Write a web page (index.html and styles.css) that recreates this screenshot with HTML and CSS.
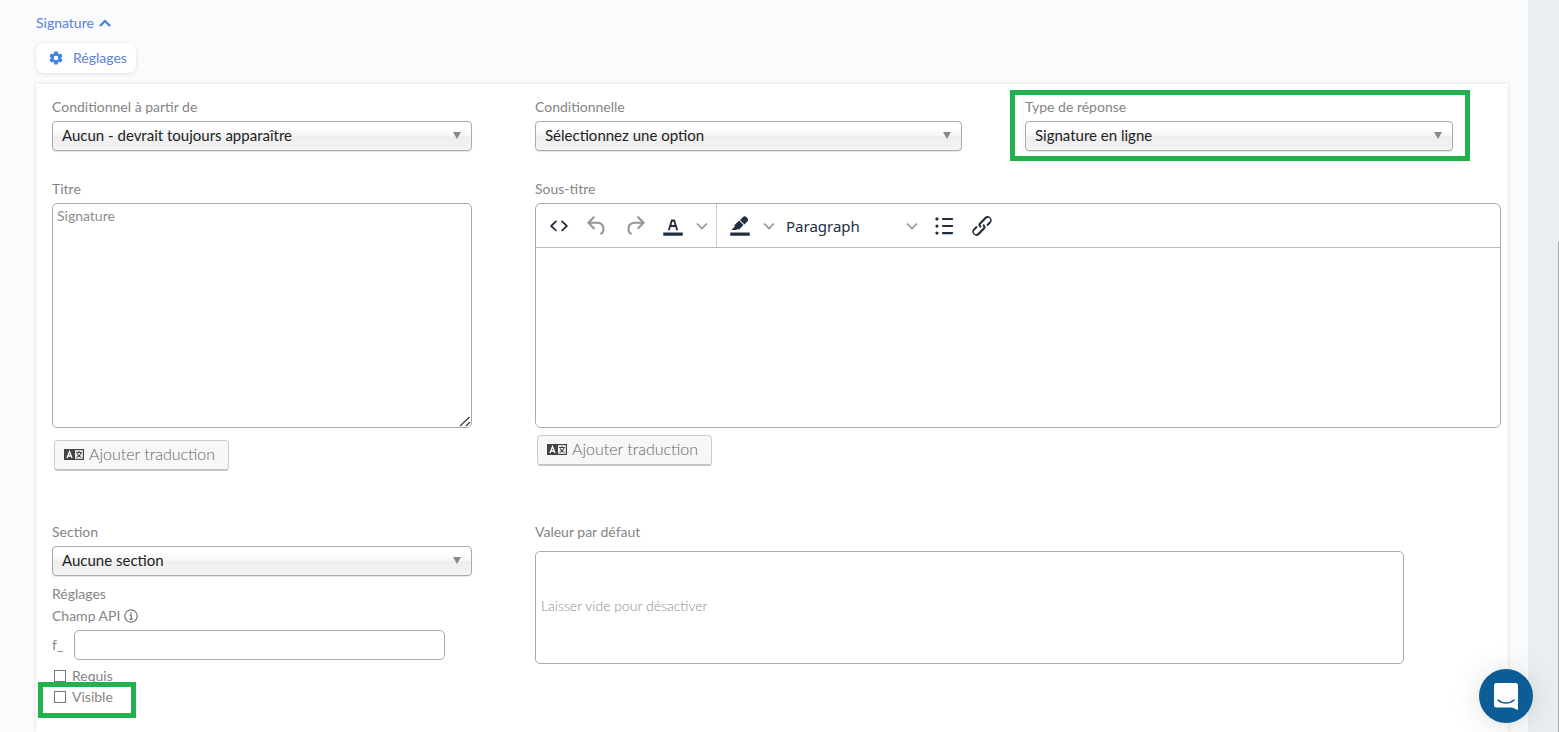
FILE: index.html
```html
<!DOCTYPE html>
<html lang="fr">
<head>
<meta charset="utf-8">
<title>Signature</title>
<link rel="stylesheet" href="styles.css">
</head>
<body>
<main class="page">
  <a class="section-link" href="#reglages">Signature
    <svg width="12" height="8" viewBox="0 0 12 8" aria-hidden="true"><path d="M1 7l5-5 5 5" fill="none" stroke="currentColor" stroke-width="2.2"/></svg>
  </a>
  <button class="settings-btn" type="button">
    <svg width="14" height="14" viewBox="0 0 24 24" aria-hidden="true"><path fill="currentColor" fill-rule="evenodd" d="M9.2 1h5.6l.6 3.2 2 1.2 3.1-1.1 2.8 4.8-2.5 2.1v1.6l2.5 2.1-2.8 4.8-3.1-1.1-2 1.2-.6 3.2H9.2l-.6-3.2-2-1.2-3.1 1.1L.7 14.900l2.500-2.100v-1.600L.7 9.100l2.800-4.800 3.100 1.100 2-1.200zM12 8a4 4 0 1 0 0 8 4 4 0 0 0 0-8z"/></svg>
    Réglages
  </button>

  <form class="card" id="reglages">
    <div class="field">
      <label for="cond-from">Conditionnel à partir de</label>
      <select id="cond-from"><option>Aucun - devrait toujours apparaître</option></select>
    </div>
    <div class="field">
      <label for="cond">Conditionnelle</label>
      <select id="cond"><option>Sélectionnez une option</option></select>
    </div>
    <div class="field narrow marked mark-type">
      <label for="type">Type de réponse</label>
      <select id="type"><option>Signature en ligne</option></select>
    </div>

    <div class="field">
      <label for="title">Titre</label>
      <div class="resizable">
        <textarea id="title" placeholder="Signature"></textarea>
        <svg class="grip" width="12" height="12" viewBox="0 0 12 12" aria-hidden="true"><path d="M1 11L10.500 2M7 11l4-4" fill="none" stroke="#444" stroke-width="1.400"/></svg>
      </div>
      <button class="translate-btn" type="button">
        <svg width="20" height="11" viewBox="0 0 20 11" aria-hidden="true"><path fill="#444" d="M0 0h20v11H0z"/><path fill="#f7f7f7" d="M11 1.200h7.800v8.600H11z"/><path d="M3 9l2.500-6.500L8 9M4 7h3" fill="none" stroke="#fff" stroke-width="1.300"/><path d="M12 3.500h6M15 2v1.500M17 3.500c-.5 2.500-2 4-4.500 5M13.300 4.500c.7 2 2 3.300 4.200 4" fill="none" stroke="#444" stroke-width="1.100"/></svg>
        Ajouter traduction
      </button>
    </div>
    <div class="field wide">
      <label for="subtitle">Sous-titre</label>
      <div class="editor">
        <div class="toolbar">
          <div class="tool-group group-start">
            <button type="button" aria-label="Code source"><svg width="26" height="26" viewBox="0 0 24 24"><path fill="#222f3e" d="M9.800 15.700c.3.3.3.8 0 1-.3.4-.9.4-1.200 0l-4.400-4.100a.8.8 0 0 1 0-1.200l4.400-4.200c.3-.3.900-.3 1.200 0 .3.300.3.800 0 1.100L6 12l3.800 3.700zM14.200 15.700c-.3.3-.3.8 0 1 .4.400.9.400 1.200 0l4.400-4.100c.3-.3.3-.9 0-1.200l-4.400-4.200a.8.8 0 0 0-1.200 0c-.3.3-.3.8 0 1.100L18 12l-3.800 3.700z"/></svg></button>
            <button type="button" aria-label="Annuler"><svg width="26" height="26" viewBox="0 0 24 24"><path fill="#929799" d="M6.400 8H12c3.700 0 6.200 2 6.800 5.100.6 2.700-.4 5.600-2.300 6.800a1 1 0 0 1-1-1.800c1.100-.6 1.800-2.700 1.400-4.600-.5-2.100-2.100-3.500-4.900-3.500H6.400l3.300 3.300a1 1 0 1 1-1.400 1.400l-5-5a1 1 0 0 1 0-1.400l5-5a1 1 0 0 1 1.400 1.400L6.400 8z"/></svg></button>
            <button type="button" aria-label="Rétablir"><svg width="26" height="26" viewBox="0 0 24 24"><path fill="#929799" d="M17.600 10H12c-2.800 0-4.400 1.400-4.900 3.500-.4 2 .3 4 1.400 4.600a1 1 0 1 1-1 1.800c-2-1.200-2.900-4.100-2.300-6.800.6-3 3-5.100 6.800-5.100h5.600l-3.300-3.300a1 1 0 1 1 1.400-1.400l5 5a1 1 0 0 1 0 1.400l-5 5a1 1 0 0 1-1.400-1.400l3.300-3.300z"/></svg></button>
            <button type="button" aria-label="Couleur du texte"><svg width="26" height="26" viewBox="0 0 24 24"><path fill="#222f3e" d="M3 18h18v3H3z"/><path fill="#222f3e" fill-rule="evenodd" d="M8.700 16h-.8a.5.5 0 0 1-.5-.6l2.700-9c.1-.3.300-.4.500-.4h2.800c.2 0 .4.1.5.4l2.700 9a.5.5 0 0 1-.5.6h-.8a.5.5 0 0 1-.4-.4l-.7-2.200c0-.3-.3-.4-.5-.4h-3.400c-.2 0-.4.1-.5.4l-.7 2.200c0 .3-.2.4-.4.4zm2.600-7.600l-.6 2a.5.5 0 0 0 .5.6h1.600a.5.5 0 0 0 .5-.6l-.6-2c0-.3-.3-.4-.5-.4h-.4c-.2 0-.4.1-.5.4z"/></svg></button>
            <button type="button" class="chev" aria-label="Choisir la couleur du texte"><svg width="14" height="10" viewBox="0 0 14 10"><path d="M2 2.500l5 5 5-5" fill="none" stroke="#929799" stroke-width="1.700"/></svg></button>
          </div>
          <div class="tool-group">
            <button type="button" aria-label="Surlignage"><svg width="26" height="26" viewBox="0 0 24 24"><g fill="#222f3e"><path d="M3 18h18v3H3z"/><path d="M7.700 16.700H3l3.300-3.300-.7-.8L10.200 8l4 4.100-4 4.200c-.2.2-.6.2-.8 0l-.6-.7-1.100 1.100zm5-7.500L11 7.400l3-2.900a2 2 0 0 1 2.600 0L18 6c.7.7.7 2 0 2.700l-2.900 2.900-1.800-1.800-.5-.6" transform="translate(1 -1)"/></g></svg></button>
            <button type="button" class="chev" aria-label="Choisir le surlignage"><svg width="14" height="10" viewBox="0 0 14 10"><path d="M2 2.500l5 5 5-5" fill="none" stroke="#929799" stroke-width="1.700"/></svg></button>
            <button type="button" class="block-format">Paragraph <svg width="14" height="10" viewBox="0 0 14 10" aria-hidden="true"><path d="M2 2.500l5 5 5-5" fill="none" stroke="#929799" stroke-width="1.700"/></svg></button>
            <button type="button" aria-label="Liste à puces"><svg width="26" height="26" viewBox="0 0 24 24"><path d="M11 5.500h8.500M11 12h8.500M11 18.500h8.500" stroke="#222f3e" stroke-width="2" stroke-linecap="round"/><g fill="#222f3e"><circle cx="5.500" cy="5.500" r="1.500"/><circle cx="5.500" cy="12" r="1.500"/><circle cx="5.500" cy="18.500" r="1.500"/></g></svg></button>
            <button type="button" aria-label="Lien"><svg width="26" height="26" viewBox="0 0 24 24"><path fill="#222f3e" d="M6.200 12.300a1 1 0 0 1 1.400 1.400l-2 2a2 2 0 1 0 2.600 2.800l4.800-4.800a1 1 0 0 0 0-1.400 1 1 0 1 1 1.400-1.300 2.900 2.900 0 0 1 0 4L9.600 20a3.900 3.900 0 0 1-5.500-5.500l2-2zm11.600-.6a1 1 0 0 1-1.400-1.400l2-2a2 2 0 1 0-2.600-2.800L11 10.300a1 1 0 0 0 0 1.400A1 1 0 1 1 9.600 13a2.900 2.900 0 0 1 0-4L14.400 4a3.900 3.900 0 0 1 5.500 5.500l-2 2z"/></svg></button>
          </div>
        </div>
        <textarea id="subtitle" class="editor-body"></textarea>
      </div>
      <button class="translate-btn" type="button">
        <svg width="20" height="11" viewBox="0 0 20 11" aria-hidden="true"><path fill="#444" d="M0 0h20v11H0z"/><path fill="#f7f7f7" d="M11 1.200h7.800v8.600H11z"/><path d="M3 9l2.500-6.500L8 9M4 7h3" fill="none" stroke="#fff" stroke-width="1.300"/><path d="M12 3.500h6M15 2v1.500M17 3.500c-.5 2.500-2 4-4.500 5M13.300 4.500c.7 2 2 3.300 4.200 4" fill="none" stroke="#444" stroke-width="1.100"/></svg>
        Ajouter traduction
      </button>
    </div>

    <div class="field">
      <label for="section">Section</label>
      <select id="section"><option>Aucune section</option></select>
      <div class="caption">Réglages</div>
      <label class="api-label" for="api">Champ API
        <svg width="14" height="14" viewBox="0 0 14 14" aria-hidden="true"><circle cx="7" cy="7" r="6.200" fill="none" stroke="#777" stroke-width="1.200"/><path d="M5.500 6.200h1.800v4M5.300 10.200h3.600M7 3.200v1.600" fill="none" stroke="#777" stroke-width="1.300"/></svg>
      </label>
      <div class="api-row"><span>f_</span><input id="api" type="text"></div>
      <label class="check"><input type="checkbox">Requis</label>
      <label class="check marked mark-visible"><input type="checkbox">Visible</label>
    </div>
    <div class="field wide">
      <label for="default">Valeur par défaut</label>
      <input id="default" class="default-value" type="text" placeholder="Laisser vide pour désactiver">
    </div>
  </form>
</main>
<div class="scroll-edge"></div>
<button class="chat" type="button" aria-label="Ouvrir la messagerie">
  <svg width="26" height="28" viewBox="0 0 26 28"><path d="M3.500 1h19A2.500 2.500 0 0 1 25 3.500V28l-6-2.500H3.500A2.500 2.500 0 0 1 1 23V3.500A2.500 2.500 0 0 1 3.500 1z" fill="#fff"/><path d="M5 18c4.500 4 11.500 4 16 0" fill="none" stroke="#0c5c96" stroke-width="1.500" stroke-linecap="round"/></svg>
</button>
</body>
</html>
```
FILE: styles.css
```css
* { box-sizing: border-box; }

body {
  margin: 0;
  height: 100vh;
  overflow: hidden;
  background: #e9eff0;
  color: #858585;
  font: 14px/20px Lato, "Liberation Sans", sans-serif;
}

button, input, select, textarea { font: inherit; color: inherit; }
button { cursor: pointer; }
svg { flex: none; }

.page {
  display: flex;
  flex-direction: column;
  align-items: flex-start;
  min-height: 100vh;
  margin-right: 31px;
  padding: 13px 20px 0 36px;
  background: #f9fbfc;
}

.section-link {
  display: flex;
  align-items: center;
  gap: 5px;
  color: #5c81d8;
  text-decoration: none;
}

.settings-btn {
  display: flex;
  align-items: center;
  gap: 10px;
  height: 30px;
  margin: 10px 0 11px;
  padding: 0 9px 0 13px;
  border: 0;
  border-radius: 8px;
  background: #fff;
  box-shadow: 0 1px 4px rgba(0, 0, 0, .12);
  color: #5c81d8;
}

.settings-btn svg, .section-link svg { color: #3f83de; }

.card {
  flex: 1;
  align-self: stretch;
  display: grid;
  grid-template-columns: 420fr 427fr 476fr;
  grid-template-rows: auto 315px auto;
  column-gap: 63px;
  row-gap: 28px;
  align-items: start;
  align-content: start;
  padding: 13px 7px 20px 16px;
  background: #fff;
  box-shadow: 0 0 4px rgba(0, 0, 0, .12);
}

.field { display: flex; flex-direction: column; min-width: 0; }
.field > label { margin-bottom: 4px; }
.wide { grid-column: 2 / 4; }
.narrow { width: 90%; }

select {
  appearance: none;
  height: 30px;
  padding: 0 28px 3px 9px;
  border: 1px solid #aaa;
  border-radius: 4px;
  background:
    url("data:image/svg+xml,%3Csvg xmlns='http://www.w3.org/2000/svg' width='8' height='7'%3E%3Cpath d='M0 0h8L4 7z' fill='%23888'/%3E%3C/svg%3E") no-repeat right 10px top 10px,
    linear-gradient(#fff 20%, #f6f6f6 50%, #eee 52%, #f4f4f4);
  box-shadow: 0 1px 1px rgba(0, 0, 0, .1);
  color: #222;
  font-size: 15px;
}

textarea, input[type="text"] {
  border: 1px solid #aaa;
  border-radius: 5px;
  background: #fff;
  outline: 0;
}

::placeholder { color: #8c8c8c; opacity: 1; }

.resizable { position: relative; display: flex; }
.resizable textarea { width: 100%; height: 225px; padding: 2px 4px; resize: none; }
.grip { position: absolute; right: 1px; bottom: 1px; }

.translate-btn {
  display: flex;
  align-items: center;
  align-self: flex-start;
  gap: 5px;
  height: 31px;
  margin: 12px 0 0 2px;
  padding: 0 13px 2px 9px;
  border: 1px solid #ccc;
  border-bottom: 2px solid #c4c4c4;
  border-radius: 4px;
  background: #f7f7f7;
  color: #666;
  font-size: 16px;
  font-weight: 300;
}

.wide .translate-btn { margin-top: 7px; }

.editor {
  display: flex;
  flex-direction: column;
  height: 225px;
  border: 1px solid #aaa;
  border-radius: 6px;
  overflow: hidden;
}

.toolbar { display: flex; height: 44px; border-bottom: 1px solid #bbb; }
.tool-group { display: flex; align-items: center; padding-left: 4px; }
.group-start { padding-right: 4px; border-right: 1px solid #ccc; }

.toolbar button {
  display: flex;
  align-items: center;
  justify-content: center;
  width: 38px;
  height: 34px;
  padding: 0;
  border: 0;
  background: none;
}

.toolbar .chev { width: 20px; }

.toolbar .block-format {
  width: 146px;
  padding: 0 6px 0 7px;
  justify-content: space-between;
  color: #222f3e;
  font: 15px/24px "Noto Sans", "Open Sans", sans-serif;
}

.editor-body { flex: 1; border: 0; border-radius: 0; resize: none; padding: 8px; }
textarea.editor-body { border: 0; }

.caption { margin-top: 7px; line-height: 22px; }
.field > .api-label { display: flex; align-items: center; gap: 4px; margin-bottom: 3px; line-height: 22px; }
.api-row { display: flex; align-items: center; gap: 11px; margin-bottom: 5px; }
.api-row input { width: 371px; height: 30px; padding: 0 6px; }

.field > .check { display: flex; align-items: center; align-self: flex-start; gap: 6px; margin: 0 0 0 2px; line-height: 21px; }

.check input {
  appearance: none;
  width: 12px;
  height: 12px;
  margin: 0;
  border: 1px solid #777;
  background: #fff;
}

input.default-value { width: 90%; height: 113px; margin-top: 5px; padding: 0 5px 4px; font-weight: 300; }

/* Highlight frames around the fields being pointed out */
.marked { position: relative; }
.marked::after { content: ""; position: absolute; border: 5px solid #22b14c; pointer-events: none; }
.mark-type::after { inset: -7px -17px -10px -15px; }
.mark-visible::after { inset: -4px -23px -11px -16px; }

.scroll-edge { position: fixed; top: 242px; right: 0; bottom: 0; width: 1px; background: #a9adae; }

.chat {
  position: fixed;
  right: 26px;
  bottom: 9px;
  display: grid;
  place-items: center;
  width: 54px;
  height: 54px;
  padding: 0;
  border: 0;
  border-radius: 50%;
  background: #0c5c96;
  box-shadow: 0 1px 6px rgba(0, 0, 0, .06), 0 2px 32px rgba(0, 0, 0, .12);
}
```
